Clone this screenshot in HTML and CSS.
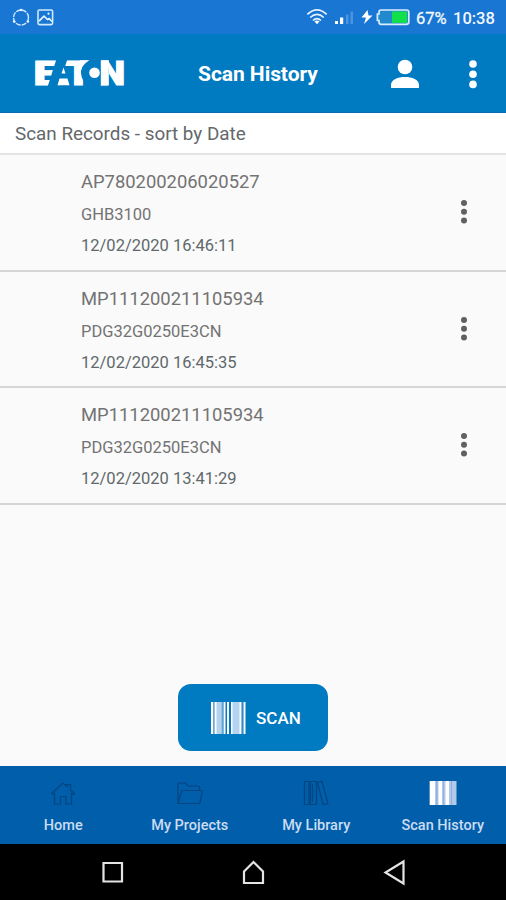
FILE: index.html
```html
<!DOCTYPE html>
<html lang="en">
<head>
<meta charset="utf-8">
<title>Scan History</title>
<link rel="stylesheet" href="styles.css">
</head>
<body>
<svg class="defs" width="0" height="0" aria-hidden="true">
  <symbol id="dots" viewBox="0 0 8 26"><circle cx="4" cy="4" r="3"/><circle cx="4" cy="12.8" r="3"/><circle cx="4" cy="21.6" r="3"/></symbol>
</svg>
<div class="screen">
  <div class="status">
    <svg class="status-left" width="44" height="20" viewBox="0 0 44 20" fill="none">
      <circle cx="9" cy="9.500" r="7.500" stroke="#cfe8ff" stroke-width="1.4" stroke-dasharray="5 1"/>
      <g fill="#e3f3ff"><circle cx="9" cy="2" r="1.200"/><circle cx="2" cy="13.500" r="1.200"/><circle cx="16" cy="13.500" r="1.200"/></g>
      <rect x="26" y="2" width="14.600" height="14.600" rx="1.500" stroke="#cfeaff" stroke-width="1.600"/>
      <path d="M27 13.200l5-5 3.500 3.300 1.500-1 3 3" stroke="#e3f3ff" stroke-width="1.700"/>
      <circle cx="36.500" cy="5.700" r="1.100" fill="#e3f3ff"/>
    </svg>
    <svg class="status-right" width="106" height="20" viewBox="0 0 106 20" fill="none">
      <g stroke="#e6f2ff" stroke-width="1.700"><path d="M1.300 6.300Q11 -2.700 20.700 6.300"/><path d="M4.200 9.500Q11 3.100 17.800 9.500"/><path d="M7 12.500Q11 8.800 15 12.500"/></g>
      <path d="M8.500 13.500Q11 11.300 13.500 13.500L11 16.300z" fill="#fff"/>
      <path d="M29 13h3v3h-3zM34 9.500h3.200V16H34z" fill="#fff"/>
      <path d="M40 6.500h2.500V16H40zM44.500 3.500H47V16h-2.500z" fill="#4c94df"/>
      <path d="M61.500 2L55.500 9.500H60L58 16L66.500 7.500H62.500z" fill="#fff"/>
      <path d="M75 2h25.500q2.300 0 2.300 2.300v9.700q0 2.300-2.300 2.300H75q-2 0-2-2.300v-1.500h-1.600V6H73V4.300Q73 2 75 2z" fill="#2389cf" stroke="#d9edff" stroke-width="1.700"/>
      <path d="M86 3.500h15v11.400H86z" fill="#12e04b"/>
    </svg>
    <span class="pct">67%</span><span class="clock">10:38</span>
  </div>
  <header class="bar">
    <svg class="logo" width="92" height="28" viewBox="0 0 92 28" role="img" aria-label="Eaton">
      <g class="logo-text">
        <text x="-.5" y="26" textLength="25" lengthAdjust="spacingAndGlyphs">E</text>
        <text x="31" y="26" textLength="27" lengthAdjust="spacingAndGlyphs">T</text>
        <text x="65" y="26" textLength="26" lengthAdjust="spacingAndGlyphs">N</text>
      </g>
      <path class="cut" d="M22.500 0L13.500 28H24L33.500 0z"/>
      <circle class="cut" cx="61" cy="13.500" r="14"/>
      <path class="white" d="M29.500 8.500L27.500 14.500H31.500zM25.500 19.500H33.500L35.500 26.300H23.500z"/>
      <path class="white" d="M66.800 1.200h8v25.100h-8z"/>
      <path class="white" d="M46 1.200h9.500Q49 5 47.500 10L46 13z"/>
      <circle class="white" cx="60.500" cy="13.700" r="5.300"/>
    </svg>
    <h1>Scan History</h1>
    <svg class="person" width="30" height="30" viewBox="0 0 30 30" fill="#fff"><circle cx="15" cy="8" r="7.300"/><path d="M1 29v-3C1 20.500 8 18 15 18s14 2.500 14 8v3z"/></svg>
    <svg class="more" width="10" height="30" viewBox="0 0 10 30" fill="#fff"><circle cx="5" cy="5" r="3.800"/><circle cx="5" cy="15.200" r="3.800"/><circle cx="5" cy="25.400" r="3.800"/></svg>
  </header>
  <div class="sort">Scan Records - sort by Date</div>
  <main>
    <article class="row"><div><h2>AP780200206020527</h2><p>GHB3100</p><time>12/02/2020 16:46:11</time></div><svg class="dots"><use href="#dots"/></svg></article>
    <article class="row"><div><h2>MP111200211105934</h2><p>PDG32G0250E3CN</p><time>12/02/2020 16:45:35</time></div><svg class="dots"><use href="#dots"/></svg></article>
    <article class="row"><div><h2>MP111200211105934</h2><p>PDG32G0250E3CN</p><time>12/02/2020 13:41:29</time></div><svg class="dots"><use href="#dots"/></svg></article>
    <button class="scan">
      <svg width="35" height="32" viewBox="0 0 35 32"><path fill="#b5d3ee" d="M0 0h11.500v32H0zM20 0h11v32H20z"/><path fill="#fff" d="M0 0h2v32H0zM4 0h1.500v32H4zM12.500 0h2v32h-2zM16 0h2v32h-2zM20 0h1.500v32H20zM28.500 0H30v32h-1.500zM32.500 0h2v32h-2z"/><path fill="#5c9fd2" d="M2.200 0h1.200v32H2.200zM10.700 0h1v32h-1zM30.500 0h1v32h-1z"/></svg>
      <span>SCAN</span>
    </button>
  </main>
  <nav class="tabs">
    <a><svg width="28" height="26" viewBox="0 0 28 26"><path d="M3 13L14 3l4 3.500V4.500h3.500V10l4 3.500-1.500 1.200L22.500 13.500V24H17v-7.500h-5.500V24H5.500V13.500l-1.300 1z"/></svg><span>Home</span></a>
    <a><svg width="28" height="26" viewBox="0 0 28 26"><path d="M2 23.500V4q0-1 1-1h6l3 3h10q1.500 0 1.500 1.500v3M2 23.500L5.500 11.500q.4-1 1.500-1h18.500q1 0 .8 1L24 22.500q-.3 1-1.500 1z"/></svg><span>My Projects</span></a>
    <a><svg width="28" height="26" viewBox="0 0 28 26"><path d="M2.500 1.500H7v23H2.500zM8.500 1.500h6v23h-6zM10.500 4v18M15.500 2.500l4.500-1 6 22-5 1z"/></svg><span>My Library</span></a>
    <a><svg class="active" width="28" height="26" viewBox="0 0 28 26"><path fill="#b2cae9" d="M.5 1h27v24H.5z"/><path fill="#fff" d="M1 1h5v24H1zM9.500 1h3.500v24H9.500zM16.500 1H20v24h-3.500z"/><path fill="#8fb1dc" d="M7 1h1.500v24H7zM14 1h1v24h-1zM22 1h1v24h-1z"/></svg><span>Scan History</span></a>
  </nav>
  <footer class="system">
    <svg viewBox="0 0 28 28"><path d="M4.500 5h18.500v18.500H4.500z"/></svg>
    <svg viewBox="0 0 28 28"><path d="M4 13.500L13.500 4L23 13.500v11.500H4z"/></svg>
    <svg viewBox="0 0 28 28"><path d="M23.500 3.500v22L5.500 14.500z"/></svg>
  </footer>
</div>
</body>
</html>
```
FILE: styles.css
```css
* { box-sizing: border-box; }
body { margin: 0; font-family: Roboto, "Liberation Sans", sans-serif; }
.defs { display: block; height: 0; }
.screen { width: 506px; height: 900px; display: flex; flex-direction: column; overflow: hidden; background: #fafafa; }
.status { height: 34px; flex: none; display: flex; align-items: center; background: #1976d2; color: #f3f9ff; padding: 2px 10px 0 12px; font-size: 16.5px; font-weight: 500; }
.status-right { margin-left: auto; margin-right: 4px; }
.pct { width: 37px; font-weight: 400; -webkit-text-stroke: .3px; }
.clock { width: 43px; }
.bar { height: 79px; flex: none; display: flex; align-items: center; background: #007ac1; border-bottom: 1px solid #0869b4; padding-left: 34px; color: #fff; }
.logo { overflow: visible; }
h1 { margin: 1px 0 0 72px; width: 121px; font-size: 21px; font-weight: 700; letter-spacing: -.05px; white-space: nowrap; }
.person { margin-left: 71px; margin-top: 2px; }
.more { margin-left: 48px; margin-top: 1px; }
.logo-text { font: 900 34px Roboto, sans-serif; fill: #fff; stroke: #fff; stroke-width: 1.2; }
.cut { fill: #007ac1; }
.white { fill: #fff; }
.sort { height: 42px; flex: none; background: #fff; border-bottom: 2px solid #e3e3e3; padding-left: 15px; font-size: 18.85px; line-height: 43px; color: #63686b; }
main { flex: 1; display: flex; flex-direction: column; }
.row { height: 116.6px; flex: none; display: flex; justify-content: space-between; align-items: center; border-bottom: 2px solid #d5d5d5; padding: 0 38px 0 81px; }
.row > div { padding-top: 2px; }
h2, p, time { display: block; margin: 0; font-weight: 400; color: #737373; white-space: nowrap; }
h2 { font-size: 18.4px; line-height: 34px; }
p { font-size: 16.5px; line-height: 31px; }
time { font-size: 16.5px; line-height: 31px; color: #5f686b; }
.dots { width: 8px; height: 26px; fill: #606060; }
.scan { margin: auto auto 15px 178px; width: 150px; height: 67px; border: 0; border-radius: 13px; background: #007ac1; color: #fff; display: flex; align-items: center; gap: 10px; padding: 0 0 0 33px; font: 500 17px Roboto, sans-serif; }
.tabs { height: 78px; flex: none; display: grid; grid-template-columns: repeat(4, 1fr); background: #005eaa; }
.tabs a { display: flex; flex-direction: column; align-items: center; padding-top: 14px; gap: 11px; color: #cbdcf2; font-size: 14.5px; font-weight: 500; line-height: 18px; white-space: nowrap; }
.tabs svg { fill: none; stroke: #044580; stroke-width: 1.2; }
.tabs .active { stroke: none; }
.system { height: 56px; flex: none; display: flex; justify-content: space-between; align-items: center; background: #000; padding: 0 98px 0 99px; }
.system svg { width: 28px; height: 28px; fill: none; stroke: #e4e4e4; stroke-width: 2.2; }
```
